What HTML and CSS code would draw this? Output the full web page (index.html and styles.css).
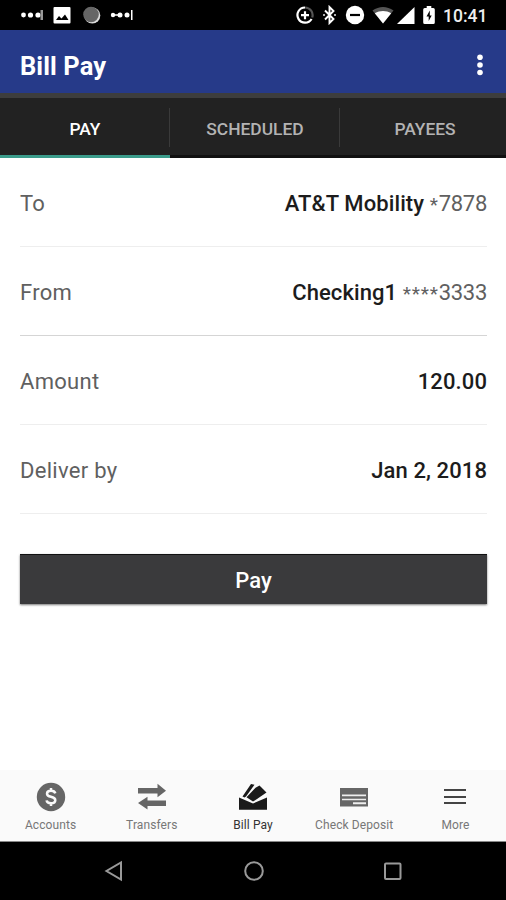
FILE: index.html
```html
<!DOCTYPE html>
<html lang="en">
<head>
    <meta charset="UTF-8">
    <meta name="viewport" content="width=device-width, initial-scale=1.0">
    <title>Bill Pay</title>
    <link rel="stylesheet" href="styles.css">
</head>
<body>
    <div class="status-bar">
        <div class="status-left">
            <svg width="24" height="20" viewBox="0 0 24 20" fill="#fff"><circle cx="3.5" cy="10" r="2.4"/><circle cx="10.5" cy="10" r="2.6"/><circle cx="18" cy="10" r="2.6"/><path d="M20.5 5h2.5v10h-2.5z" fill="#999"/></svg>
            <svg class="picture" width="18" height="20" viewBox="0 0 18 20"><rect x="0.5" y="2" width="17" height="16.5" rx="1" fill="#fff"/><path d="M3 15l3-4 2.5 2.5 3.5-4 3.5 5.5z" fill="#000"/></svg>
            <svg class="sync" width="18" height="20" viewBox="0 0 18 20"><circle cx="9.3" cy="10.5" r="8" fill="#ddd"/><circle cx="8" cy="9.5" r="7.8" fill="#666"/></svg>
            <svg class="more-dots" width="24" height="20" viewBox="0 0 24 20" fill="#fff"><circle cx="3" cy="10" r="2.2"/><circle cx="10" cy="10" r="2.5"/><circle cx="17" cy="10" r="2.5"/><path d="M3 9.2h7v1.6h-7zM21 5h1.5v10h-1.5z"/></svg>
        </div>
        <div class="status-right">
            <svg width="18" height="20" viewBox="0 0 18 20" fill="none" stroke="#fff" stroke-width="2.2"><path d="M9 2.5a7.6 7.6 0 0 1 7.2 10" stroke="#555"/><path d="M9 2.5a7.6 7.6 0 1 0 6.6 11.5M5 10.2h8M9 6.2v8"/></svg>
            <svg class="bluetooth" width="14" height="20" viewBox="0 0 14 20" fill="none" stroke="#fff" stroke-width="1.9"><path d="M2 5.5l8.5 8.5-4 4v-16l4 4L2 14.5"/><path d="M12 9v2M1 9v2" stroke="#bbb"/></svg>
            <svg class="dnd" width="20" height="20" viewBox="0 0 20 20"><circle cx="10" cy="10" r="9.2" fill="#fff"/><path d="M5 8.9h10v2.2H5z" fill="#000"/></svg>
            <svg class="wifi" width="22" height="20" viewBox="0 0 22 20"><path d="M.5 5.5C7 .8 15 .8 21.5 5.5L11 18.5z" fill="#555"/><path d="M2.8 8.200C8 5.200 14 5.200 19.200 8.200L11 18.500z" fill="#fff"/></svg>
            <svg class="signal" width="18" height="20" viewBox="0 0 18 20"><path d="M17.5 2v17H0z" fill="#fff"/></svg>
            <svg class="battery" width="12" height="20" viewBox="0 0 12 20"><path d="M3.7 1h4.6v2h2q1.5 0 1.5 1.5v13q0 1.5-1.5 1.5h-8.6q-1.5 0-1.5-1.5v-13q0-1.5 1.5-1.5h2z" fill="#fff"/><path d="M6.8 5.5l-3.3 6h2.2v4.5l3-5.5H6.8z" fill="#000"/></svg>
            <span class="clock">10:41</span>
        </div>
    </div>

    <header>
        <h1>Bill Pay</h1>
        <svg width="8" height="24" viewBox="0 0 8 24" fill="#fff"><circle cx="4" cy="4.3" r="2.8"/><circle cx="4" cy="12" r="2.8"/><circle cx="4" cy="19.5" r="2.8"/></svg>
    </header>

    <div class="tabs">
        <div class="tab active">PAY</div>
        <div class="tab">SCHEDULED</div>
        <div class="tab">PAYEES</div>
    </div>

    <div class="container">
        <div class="row">
            <span class="label">To</span>
            <span class="value">AT&amp;T Mobility <span class="number"><small>*</small>7878</span></span>
        </div>
        <div class="row dark-line">
            <span class="label">From</span>
            <span class="value">Checking1 <span class="number"><small>****</small>3333</span></span>
        </div>
        <div class="row">
            <span class="label">Amount</span>
            <span class="value">120.00</span>
        </div>
        <div class="row">
            <span class="label">Deliver by</span>
            <span class="value">Jan 2, 2018</span>
        </div>
        <button class="btn">Pay</button>
    </div>

    <div class="bottom-nav">
        <div class="item">
            <svg width="30" height="30" viewBox="0 0 30 30"><circle cx="15" cy="15" r="14.2" fill="#666"/><path d="M19.3 11.3q-.7-2.5-4.3-2.5-4 0-4 2.9 0 2.3 4 3.1 4.3.9 4.3 3.4 0 3-4.3 3-4 0-4.4-2.9M15 6v3M15 21v3" fill="none" stroke="#fafafa" stroke-width="2.5"/></svg>
            <span>Accounts</span>
        </div>
        <div class="item">
            <svg width="30" height="30" viewBox="0 0 30 30" fill="#666"><path d="M1 6h19.5V1.8l8.5 7-8.5 6.4v-3.7H1zM29 24H10.5v3.5L1 20.9l9.5-6.2v3.8H29z"/></svg>
            <span>Transfers</span>
        </div>
        <div class="item active">
            <svg width="30" height="30" viewBox="0 0 30 30" fill="#1a1a1a"><path d="M1 15.5l14 6 14-6v12.300H1zM4.500 14.500L13 2l3.500.8-8.500 11.700-1.500 1zM8.500 15.300L17.500 5.800l4-2.300 7 7-9.500 6.500-4 2.500z"/></svg>
            <span>Bill Pay</span>
        </div>
        <div class="item">
            <svg width="30" height="30" viewBox="0 0 30 30"><path d="M1 6h28v18.500H1z" fill="#666"/><path d="M3 12.500h24v1.800H3zM3 16.700h24v1.500H3zM14 20.200h13v2H14z" fill="#eee"/></svg>
            <span>Check Deposit</span>
        </div>
        <div class="item">
            <svg width="30" height="30" viewBox="0 0 30 30" fill="#444"><path d="M4 7h22v2H4zM4 14h22v2H4zM4 20h22v2H4z"/></svg>
            <span>More</span>
        </div>
    </div>

    <div class="system-nav">
        <svg width="20" height="22" viewBox="0 0 20 22"><path d="M17 2.500v17L2.500 11z"/></svg>
        <svg width="22" height="22" viewBox="0 0 22 22"><circle cx="11" cy="11" r="8.800"/></svg>
        <svg width="20" height="22" viewBox="0 0 20 22"><rect x="2" y="3.500" width="15.500" height="15.500" rx="1"/></svg>
    </div>
</body>
</html>
```

FILE: styles.css
```css
* { box-sizing: border-box; }
body { font-family: Roboto, sans-serif; margin: 0; padding: 0; width: 506px; height: 900px; display: flex; flex-direction: column; background: #fff; overflow: hidden; }
svg { display: block; flex: none; }

.status-bar { background: #000; height: 30px; padding: 0 20px; display: flex; justify-content: space-between; align-items: center; }
.status-left, .status-right { display: flex; align-items: center; }
.picture { margin-left: 9px; }
.sync { margin-left: 12px; }
.more-dots { margin-left: 9px; }
.bluetooth { margin-left: 9px; }
.dnd { margin-left: 8px; }
.wifi { margin-left: 7px; }
.signal { margin-left: 3px; }
.battery { margin-left: 8px; }
.clock { color: #eee; font-size: 17.5px; font-weight: 500; line-height: 20px; margin: 2px 0 0 8px; width: 43px; white-space: nowrap; }

header { background: #263a89; color: #fff; height: 63px; padding: 3px 22px 0 20px; display: flex; justify-content: space-between; align-items: flex-start; }
header h1 { margin: 0; font-size: 25.5px; font-weight: 700; line-height: 66px; letter-spacing: 0.1px; }
header svg { margin-top: 20px; }

.tabs { background: #222; border-top: 5px solid #3d3d3d; height: 65px; display: flex; flex: none; overflow: hidden; }
.tab { flex: none; width: 170px; color: #b3b3b3; font-size: 17.4px; font-weight: 500; line-height: 63px; text-align: center; border-bottom: 3px solid #111; background: linear-gradient(#3a3a3a, #3a3a3a) right 10px / 1px 39px no-repeat; }
.tab:last-child { background: none; }
.tab.active { color: #fff; border-bottom-color: #3b9c8b; }

.container { flex: 1; padding: 0 19px 0 20px; }
.row { height: 89px; display: flex; justify-content: space-between; border-bottom: 1px solid #eee; font-size: 22px; line-height: 92px; }
.dark-line { border-bottom-color: #d5d5d5; }
.label { color: #606060; letter-spacing: 0.3px; }
.value { color: #1c1c1c; font-weight: 500; letter-spacing: 0.1px; }
.number { color: #606060; font-weight: 400; letter-spacing: -0.3px; }
.number small { display: inline-block; font-size: 19px; line-height: 20px; letter-spacing: 0.8px; }
.btn { display: block; width: 100%; height: 50px; margin-top: 40px; padding: 2px 0 0; border: 0; border-top: 1px solid #111; background: #3a3a3c; color: #fff; font-family: inherit; font-size: 22px; font-weight: 500; box-shadow: 0 1px 2px #777; }

.bottom-nav { background: #fafafa; height: 72px; border-bottom: 1px solid #888; display: flex; }
.item { flex: 1; display: flex; flex-direction: column; align-items: center; padding-top: 12px; color: #777; font-size: 12px; white-space: nowrap; }
.item span { line-height: 16px; margin: 5px 0 0; letter-spacing: 0.1px; }
.item.active { color: #333; }

.system-nav { background: #000; height: 58px; padding: 0 103px 0 104px; display: flex; justify-content: space-between; align-items: center; }
.system-nav svg { fill: none; stroke: #999; stroke-width: 2; }
```
